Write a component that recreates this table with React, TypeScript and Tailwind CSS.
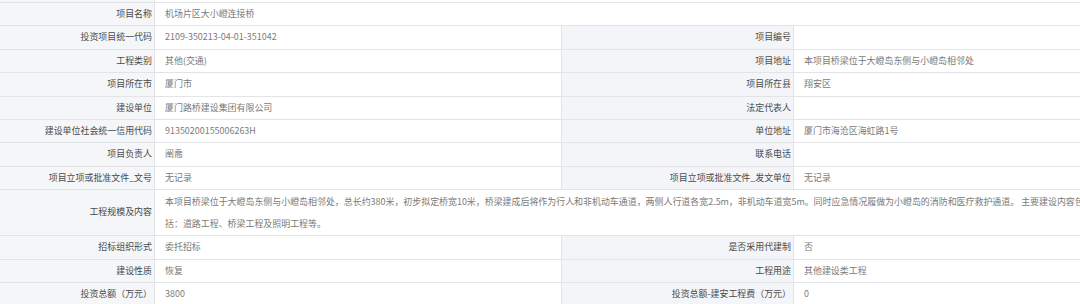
const font = { fontFamily: '"Noto Sans CJK SC", "Noto Sans", sans-serif' };

type Pair = { label: string; value?: string };
type RowDef = { h: number; left: Pair; right?: Pair };

const rows: RowDef[] = [
  { h: 23, left: { label: '项目名称', value: '机场片区大小嶝连接桥' } },
  { h: 24, left: { label: '投资项目统一代码', value: '2109-350213-04-01-351042' }, right: { label: '项目编号' } },
  { h: 23, left: { label: '工程类别', value: '其他(交通)' }, right: { label: '项目地址', value: '本项目桥梁位于大嶝岛东侧与小嶝岛相邻处' } },
  { h: 24, left: { label: '项目所在市', value: '厦门市' }, right: { label: '项目所在县', value: '翔安区' } },
  { h: 23, left: { label: '建设单位', value: '厦门路桥建设集团有限公司' }, right: { label: '法定代表人' } },
  { h: 23, left: { label: '建设单位社会统一信用代码', value: '91350200155006263H' }, right: { label: '单位地址', value: '厦门市海沧区海虹路1号' } },
  { h: 24, left: { label: '项目负责人', value: '阐喬' }, right: { label: '联系电话' } },
  { h: 23, left: { label: '项目立项或批准文件_文号', value: '无记录' }, right: { label: '项目立项或批准文件_发文单位', value: '无记录' } },
];

const rowsAfter: RowDef[] = [
  { h: 24, left: { label: '招标组织形式', value: '委托招标' }, right: { label: '是否采用代建制', value: '否' } },
  { h: 23, left: { label: '建设性质', value: '恢复' }, right: { label: '工程用途', value: '其他建设类工程' } },
  { h: 24, left: { label: '投资总额（万元）', value: '3800' }, right: { label: '投资总额-建安工程费（万元）', value: '0' } },
];

function Label({ text, right }: { text: string; right?: boolean }) {
  return (
    <div
      className={
        'flex items-center justify-end pr-[2px] border-r border-[#e2e4e8] text-[#4a4a4a] whitespace-nowrap ' +
        (right ? 'bg-[#f3f5f9]' : 'bg-[#f5f6f8]')
      }
    >
      {text}
    </div>
  );
}

function Value({ text, span }: { text?: string; span?: boolean }) {
  return (
    <div
      className={
        'flex items-center pl-[10px] bg-white border-r border-[#e2e4e8] text-[#7a7a7a] whitespace-nowrap ' +
        (span ? 'col-span-3' : '')
      }
    >
      {text}
    </div>
  );
}

function Row({ row }: { row: RowDef }) {
  return (
    <div
      className="grid grid-cols-[155px_407px_232px_300px] border-b border-[#e2e4e8]"
      style={{ height: row.h }}
    >
      <Label text={row.left.label} />
      <Value text={row.left.value} span={!row.right} />
      {row.right && (
        <>
          <Label text={row.right.label} right />
          <Value text={row.right.value} />
        </>
      )}
    </div>
  );
}

export default function App() {
  return (
    <div className="w-[1080px] h-[304px] overflow-hidden bg-white text-[8.95px] leading-none" style={font}>
      <div className="w-[1094px]">
        <div className="grid grid-cols-[155px_939px] h-[3px] border-b border-[#e2e4e8]">
          <div className="bg-[#f5f6f8] border-r border-[#e2e4e8]" />
          <div className="bg-white" />
        </div>
        {rows.map((r) => (
          <Row key={r.left.label} row={r} />
        ))}
        <div className="grid grid-cols-[155px_939px] h-[46px] border-b border-[#e2e4e8]">
          <Label text="工程规模及内容" />
          <div className="flex flex-col justify-center pl-[10px] bg-white text-[#7a7a7a] whitespace-nowrap leading-[22px]">
            <span>
              本项目桥梁位于大嶝岛东侧与小嶝岛相邻处，总长约380米，初步拟定桥宽10米，桥梁建成后将作为行人和非机动车通道，两侧人行道各宽2.5m，非机动车道宽5m。同时应急情况履做为小嶝岛的消防和医疗救护通道。 主要建设内容包
            </span>
            <span>括：道路工程、桥梁工程及照明工程等。</span>
          </div>
        </div>
        {rowsAfter.map((r) => (
          <Row key={r.left.label} row={r} />
        ))}
      </div>
    </div>
  );
}
